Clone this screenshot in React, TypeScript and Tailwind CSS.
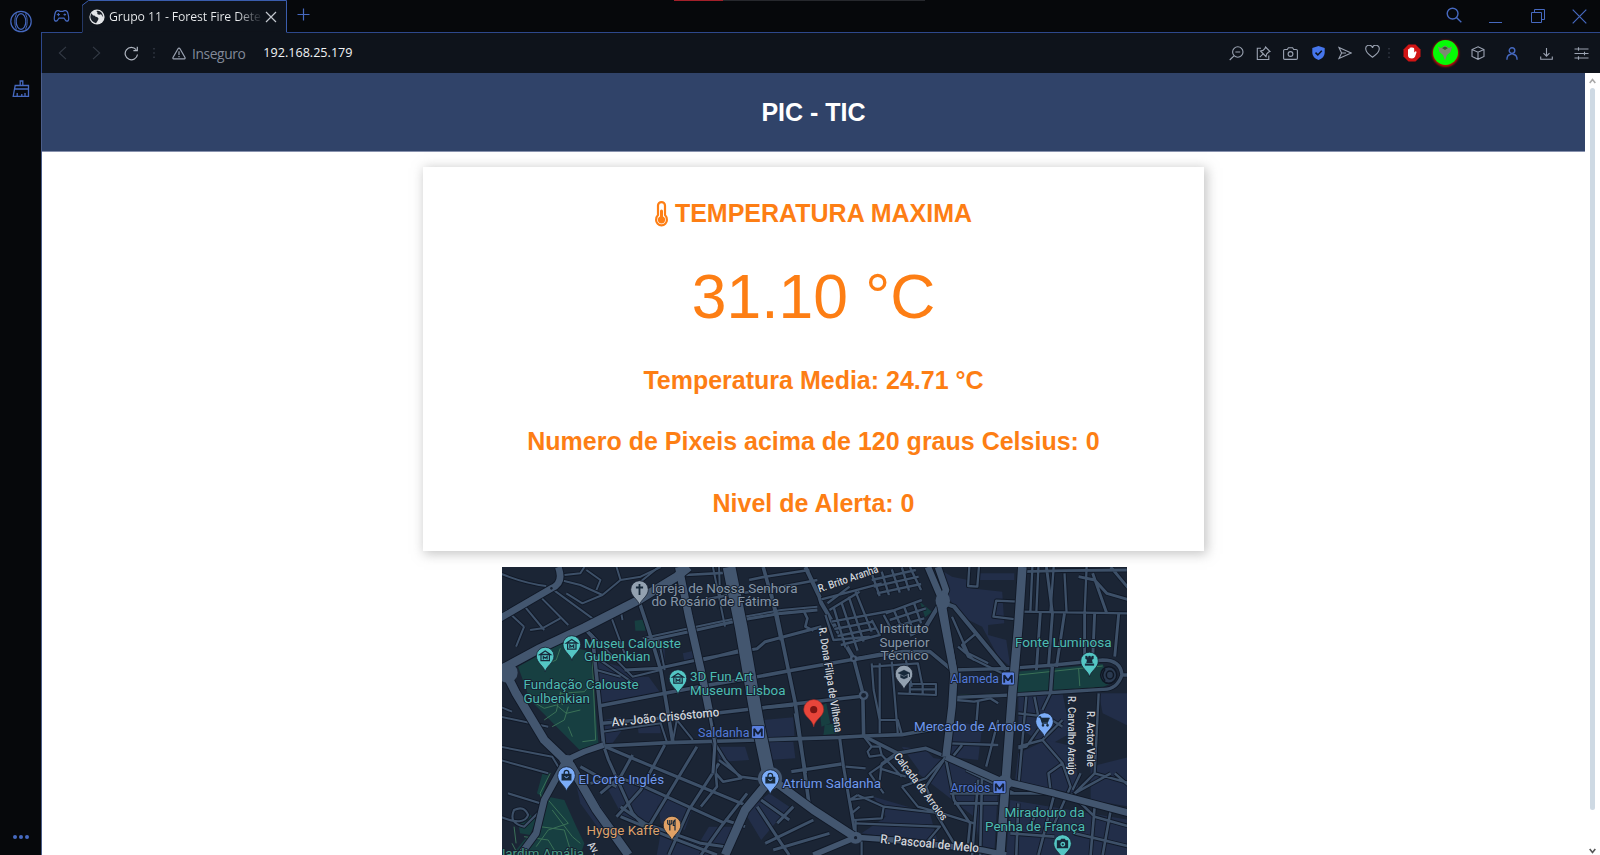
import React from 'react';

const BLUE = '#4669c0';
const GRAY = '#9ba3b2';

type RoadProps = { d: string; w: number; c?: string };

const areas: string[] = [
  'M240 300L300 320L345 350L370 350L400 400L250 430Z',
  'M395 240H410V325H395Z',
  'M455 280L490 270V310H460Z',
  'M1085 21L1125 50L1165 60L1170 85L1250 95L1255 190L1215 195V225L1260 240L1270 320L1240 290L1200 200L1150 170L1120 120Z',
  'M1195 40H1280V60H1195Z',
  'M260 480L300 470L310 500L280 550L260 548Z',
  'M340 480H400V520H345Z',
  'M655 480L730 472L733 528L660 534Z',
  'M540 560H610L620 600L545 606Z',
  'M660 545H730L735 595L668 600Z',
  'M180 620L230 700L300 830L260 830L200 730Z',
  'M270 690L310 660L400 710L380 790L310 780Z',
  'M390 700L480 740L460 810L400 790Z',
  'M610 760L670 700L720 740L650 840Z',
  'M400 820L520 850V885H390Z',
  'M1060 590L1110 600L1240 670L1230 885H1200L1180 770L1040 640Z',
  'M930 710L1070 760L1090 850L900 820L960 770Z',
  'M1290 410L1400 400L1420 520L1360 560L1290 500Z',
  'M1360 540L1430 560L1440 700L1280 680L1290 580Z',
  'M1120 480L1200 500L1190 600L1118 590Z',
  'M1490 400L1568 400V500L1500 460Z',
  'M1470 620L1568 590V740L1470 720Z',
  'M1270 720L1568 780V885H1260Z',
  'M1000 560L1060 570L1100 620L1060 660Z',
  'M520 800L600 800L560 860L500 840Z',
];

const greens: string[] = [
  'M45 320L150 250L225 275L245 550L200 572L75 420Z',
  'M335 182L362 178V212H337Z',
  'M1045 125L1075 155L1058 172Z',
  'M1285 335L1500 312L1520 370L1500 382L1285 400Z',
  'M795 440L812 430L822 490L800 500Z',
  'M808 495L845 488L842 520L805 525Z',
  'M120 710L160 720L190 800L210 850L200 885H30L60 840L100 800Z',
  'M45 790L75 765L90 780L75 825L50 820Z',
  'M108 630L122 640L105 710L92 700Z',
];

const roads: RoadProps[] = [
  // narrow streets, west
  { w: 2.4, d: 'M0 40Q60 70 115 78M15 150L60 200M55 130L110 210M55 130L20 155M60 200L40 260M75 210L105 205L150 175M128 85L230 175M100 110L170 195M150 60L200 75L255 105L300 60L290 21M160 45L200 40L210 21M255 105L205 130L165 100M300 60L350 50L400 21M215 30L250 60L240 90' },
  { w: 2.4, d: 'M275 165L310 280M225 220L330 350L400 330M225 280L345 380M240 330L300 350M300 150L305 180' },
  { w: 4, d: 'M345 120L370 210L400 330L430 545M210 205L230 230L245 400L258 555' },
  { w: 3.5, d: 'M365 242L470 215L600 180L700 160L790 150M310 330L395 325L490 300L620 270L640 266L660 245L800 200M505 300L600 270' },
  { w: 2.4, d: 'M355 235L470 205L600 172L700 150L790 140M530 21L560 200M545 21L548 110L590 100M610 130L680 120M395 21L345 70M395 240L410 330' },
  { w: 3, d: 'M620 60L660 50L770 30M600 100L680 85L790 60M465 130L590 100M460 45L570 38M755 150L765 175L760 200L780 212' },
  { w: 4, d: 'M250 437L430 395L520 375L620 355L730 330L880 298L960 280' },
  { w: 4, d: 'M255 490L520 462L640 445L780 425L905 408' },
  { w: 2.4, d: 'M255 515L400 490L415 545M430 545L440 480L480 540M525 470L540 550M0 470L120 500M0 560L130 590L145 620M0 600L120 640M0 440L30 455' },
  { w: 4, d: 'M258 558L420 548L640 540L845 532L905 528L1000 524L1120 498' },
  { w: 3.4, d: 'M258 558L340 600L430 645L620 740M258 558L270 600L330 760L360 800M330 585L300 650L250 700M410 555L350 690L290 770M490 560L430 680L370 800M225 670L290 650L360 680L560 790M200 620L290 680M545 610L470 750L420 885M615 700L550 800L500 885M300 740L360 790L500 850L560 860M300 770L420 830L540 885' },
  { w: 3, d: 'M535 550L560 600L600 655L555 665L530 630M545 600L600 650L660 660M530 545L540 680L500 740' },
  { w: 2.5, d: 'M0 770Q60 800 70 765Q60 735 35 750Q20 790 60 800L110 740M20 700L100 730' },
  // centre
  { w: 4, d: 'M655 21L690 170L735 430L770 740M675 100L700 240M745 530L760 640' },
  { w: 3.8, d: 'M735 460L745 530M725 635L850 612M640 445L730 435' },
  { w: 3.4, d: 'M845 530L855 620L885 830M690 790L730 740M660 850L780 780M680 870L820 820M640 740L700 850L720 885M700 680L770 740M560 780L610 800M650 720L720 780' },
  { w: 4.5, d: 'M760 21L795 110L800 130L880 295' },
  { w: 4, d: 'M880 295L903 400L905 528L990 580L1060 565L1110 590' },
  { w: 2.6, d: 'M880 295L960 285M925 310L930 390L945 480L945 520M945 310V480H990L1000 524M975 305L990 520M925 320L1040 310L1050 370M1010 300L1025 380M990 400L1085 405V372H1020V400M1052 372V405M1020 388H1085' },
  { w: 4, d: 'M885 298L1000 275L1070 275L1125 330' },
  { w: 2.6, d: 'M905 528L925 560L915 575L920 590L950 585L945 560L925 560M950 585L1000 650M985 580L950 610L945 660M945 625L1010 650M1000 680L1060 655L1110 590M1000 680L1040 740L1100 760M890 705L870 720L880 780L950 775L955 740L890 705M955 740L1100 760L1180 790M870 720L930 710M895 740L875 760M885 790L1095 800L1060 850' },
  { w: 2.6, d: 'M955 700L920 640L980 590M860 620L910 625M900 830L900 885M885 780V830' },
  // east
  { w: 4.5, d: 'M1100 120L1060 200L1020 225M1095 125L1130 140L1260 330' },
  { w: 2.7, d: 'M1125 170L1165 280L1215 310M1185 220L1150 255L1165 290L1250 340M1140 260L1180 300M1168 21L1165 78L1188 80L1192 21M1290 125L1235 122L1228 170L1285 178M1295 155L1568 160M1325 21L1320 155M1340 21L1335 155M1378 21L1370 155M1405 40L1410 155M1460 21L1455 160' },
  { w: 3.3, d: 'M1300 35L1400 32L1560 30M1360 21L1375 160L1365 320M1405 160L1385 320M1345 155L1335 330M1455 160V310M1475 40L1510 160M1480 160L1475 300M1540 160L1530 290M1440 50L1480 60L1510 100L1568 120M1520 21L1568 90' },
  { w: 3.8, d: 'M1130 330L1270 325L1380 315L1500 300Q1545 300 1548 345Q1535 390 1500 388L1275 405L1135 412M1375 315L1370 400M1545 345H1568' },
  { w: 2.8, d: 'M1135 420L1180 425L1220 415L1240 430M1190 425L1185 500M1240 480L1210 620M1120 550L1240 555M1290 460L1360 470L1400 500M1310 410L1290 680M1330 410L1345 500L1310 560L1290 565M1370 400L1350 450M1350 540L1400 610L1420 680L1380 790M1290 560L1350 540L1400 480M1400 610L1365 640L1370 690M1490 400L1480 640L1430 700M1425 690L1445 640M1480 640L1568 670M1430 700L1520 640M1530 640L1568 680' },
  { w: 3, d: 'M1110 590L1060 680L1090 770L1130 850M1110 600L1130 720L1170 790L1165 850M1150 555L1120 600M1160 630L1280 700M1190 660L1175 885M1120 700H1380M1130 730H1240M1200 640L1195 885M1290 730L1285 885M1340 740L1320 800M1380 700L1340 885M1480 740L1470 885M1520 750L1500 885M1430 820L1568 860M1420 700L1480 770L1568 800M1270 820L1380 830' },
];

const mainRoads: RoadProps[] = [
  { w: 7, d: 'M0 175L128 85Q160 70 145 21' },
  { w: 9, d: 'M0 330L100 265L210 203L345 120L440 50L470 21' },
  { w: 9, d: 'M15 340L40 400L110 540L175 615L240 750L320 885' },
  { w: 7, d: 'M165 600L110 720L90 820L50 885' },
  { w: 6, d: 'M165 600L210 575L258 555' },
  { w: 8, d: 'M445 21L470 170L500 330L520 450' },
  { w: 3.5, d: 'M520 450L535 550L530 640' },
  { w: 13, d: 'M570 21L600 200L640 480L668 640' },
  { w: 9, d: 'M672 660L610 750L560 885' },
  { w: 8.5, d: 'M690 670L780 750L885 832' },
  { w: 6, d: 'M885 832L980 840L1200 870L1260 885' },
  { w: 6, d: 'M885 832L780 885' },
  { w: 7, d: 'M1065 21L1100 120L1125 300L1130 340M1090 21L1110 90L1100 120' },
  { w: 8, d: 'M1095 120L1130 340L1125 440L1110 590' },
  { w: 9, d: 'M1300 21L1290 200L1275 400L1260 640L1245 885' },
  { w: 7, d: 'M1110 590L1240 660L1380 700L1568 760' },
];

const blockStreets =
  'M815 130L870 80M820 150L895 95M825 185L985 150M810 165L830 240L920 230M830 140L860 262M850 128L890 272M868 110L905 245M885 95L925 215M800 118L950 70M832 207L930 185M840 228L935 205M848 255L945 225L925 180M925 60L1035 30M930 80L1042 50M938 100L1048 72M925 40L945 108M950 35L968 105M975 28L995 98M1000 22L1018 92M1020 21L1048 90M960 160L1050 120M970 180L1060 145M980 200L1056 175M980 150L1000 205M1005 138L1025 200M1030 128L1048 190M955 165L975 210';

const parkPaths =
  'M75 420L110 445L140 435L165 460L200 450M110 480L140 455L150 400L210 395L240 350M215 280L230 300L238 540L205 545M130 500L160 480L170 440M180 530L170 500M150 265L140 300L120 310M150 395L155 435M1290 345L1500 318M1440 325L1443 378M1140 406L1285 400L1480 384M125 640L100 700L110 740M120 720L170 790L120 810L90 860M130 750L180 830L200 850M60 830L120 840L140 880M100 800L160 810L175 870M30 850L45 885M35 800L40 850';

function Roads({ list }: { list: RoadProps[] }) {
  return (
    <>
      {list.map((r, i) => (
        <path key={'c' + i} d={r.d} stroke="#111927" strokeWidth={r.w + 1.4} vectorEffect="non-scaling-stroke" />
      ))}
      {list.map((r, i) => (
        <path key={'r' + i} d={r.d} stroke={r.c ?? '#3d5068'} strokeWidth={r.w - 0.4} vectorEffect="non-scaling-stroke" />
      ))}
    </>
  );
}

type LabelProps = { x: number; y: number; w: number; c: string; children: string; size?: number; rotate?: number; bold?: boolean };

function Label({ x, y, w, c, children, size = 13.6, rotate = 0, bold }: LabelProps) {
  return (
    <text
      x={x}
      y={y}
      textLength={w}
      lengthAdjust="spacingAndGlyphs"
      fontSize={size}
      fill={c}
      fontWeight={bold ? 500 : 400}
      stroke="#172131"
      strokeWidth={2}
      strokeLinejoin="round"
      paintOrder="stroke"
      transform={`rotate(${rotate} ${x} ${y})`}
    >
      {children}
    </text>
  );
}

function Pin({ x, y, c, children }: { x: number; y: number; c: string; children: React.ReactNode }) {
  return (
    <g transform={`translate(${x} ${y})`}>
      <path d="M0 16C-1 10-8.8 7-8.8 0A8.8 8.8 0 0 1 8.8 0C8.8 7 1 10 0 16Z" fill={c} stroke="#172131" strokeWidth="0.8" />
      <g fill="none" stroke="#17293a" strokeWidth="1.3">
        {children}
      </g>
    </g>
  );
}

const Museum = () => (
  <>
    <path d="M-5.3-1.5L0-5L5.3-1.5Z" />
    <path d="M-4.2-1V4.6H4.2V-1M-1.9 3.5V0.5L0 2.2L1.9 0.5V3.5" strokeWidth="1.2" />
  </>
);

const Bag = () => (
  <>
    <path d="M-4.3-1.2H4.3V4.4H-4.3Z" fill="#17293a" />
    <path d="M-2.3-1V-2.8A2.3 2.3 0 0 1 2.3-2.8V-1" />
    <path d="M-2 1Q0 3.3 2 1" stroke="#7bacf8" strokeWidth="1" />
  </>
);

function Metro({ x, y }: { x: number; y: number }) {
  return (
    <g>
      <rect x={x - 6.5} y={y - 6.5} width="13" height="13" rx="1.5" fill="#5a80e0" stroke="#172131" strokeWidth="0.8" />
      <path d="M-3.8 4.2V-3.2L0 2L3.8-3.2V4.2" transform={`translate(${x} ${y})`} fill="none" stroke="#14203a" strokeWidth="1.9" strokeLinejoin="bevel" />
    </g>
  );
}

function CityMap() {
  const teal = '#4dbcb2';
  const blue = '#7099ee';
  const metro = '#5379d6';
  const gray = '#8696a7';
  const white = '#cfd3da';
  return (
    <svg width="625" height="288" viewBox="502 567 625 288" className="block" fontFamily="Roboto, sans-serif">
      <rect x="502" y="567" width="625" height="288" fill="#1b2535" />
      <g transform="translate(500 560) scale(0.40179 0.33333)" fill="none" strokeLinejoin="round">
        {areas.map((d) => (
          <path key={d} d={d} fill="#222e49" />
        ))}
        {greens.map((d) => (
          <path key={d} d={d} fill="#173f41" />
        ))}
        <path d={parkPaths} stroke="#3a7157" strokeWidth="1" vectorEffect="non-scaling-stroke" />
        <Roads list={roads} />
        <Roads list={[{ w: 2.8, d: blockStreets }]} />
        <Roads list={mainRoads.map((r) => ({ ...r, c: '#43566f' }))} />
        <g fill="#43566f">
          <ellipse cx="18" cy="338" rx="26" ry="30" />
          <ellipse cx="672" cy="655" rx="30" ry="34" />
          <ellipse cx="165" cy="600" rx="17" ry="15" />
          <ellipse cx="1102" cy="122" rx="18" ry="26" />
          <ellipse cx="1255" cy="668" rx="20" ry="22" />
          <ellipse cx="885" cy="833" rx="17" ry="18" />
          <ellipse cx="905" cy="406" rx="12" ry="14" />
          <ellipse cx="880" cy="296" rx="9" ry="10" />
          <ellipse cx="885" cy="833" rx="4" ry="5" fill="#172131" />
          <ellipse cx="905" cy="406" rx="6" ry="7" fill="#172131" />
          <ellipse cx="880" cy="296" rx="3" ry="4" fill="#172131" />
          <ellipse cx="128" cy="85" rx="3" ry="4" fill="#172131" />
        </g>
        <ellipse cx="1515" cy="345" rx="20" ry="25" fill="#2a3a50" stroke="#0f1724" strokeWidth="1.5" vectorEffect="non-scaling-stroke" />
        <ellipse cx="1518" cy="345" rx="9" ry="12" stroke="#0f1724" strokeWidth="1.5" vectorEffect="non-scaling-stroke" />
        <path d="M1506 328Q1494 345 1506 362" stroke="#0f1724" strokeWidth="1.5" vectorEffect="non-scaling-stroke" />
      </g>

      <Label x={651.5} y={592.5} w={146} c={gray}>Igreja de Nossa Senhora</Label>
      <Label x={651.5} y={606} w={127.5} c={gray}>do Rosário de Fátima</Label>
      <Label x={584} y={647.5} w={97} c={teal}>Museu Calouste</Label>
      <Label x={584} y={661} w={66.5} c={teal}>Gulbenkian</Label>
      <Label x={523.5} y={689} w={115} c={teal}>Fundação Calouste</Label>
      <Label x={523.5} y={702.5} w={66.5} c={teal}>Gulbenkian</Label>
      <Label x={690} y={681} w={63} c={teal}>3D Fun Art</Label>
      <Label x={690} y={694.5} w={95.5} c={teal}>Museum Lisboa</Label>
      <Label x={879.5} y={633} w={49} c={gray}>Instituto</Label>
      <Label x={879.5} y={646.5} w={50} c={gray}>Superior</Label>
      <Label x={880.5} y={660} w={48} c={gray}>Técnico</Label>
      <Label x={1015} y={647} w={96.5} c={teal}>Fonte Luminosa</Label>
      <Label x={950.5} y={682.5} w={48.5} c={metro}>Alameda</Label>
      <Label x={698} y={736.5} w={51.5} c={metro}>Saldanha</Label>
      <Label x={914} y={730.5} w={117} c={blue}>Mercado de Arroios</Label>
      <Label x={950.5} y={791.5} w={40} c={metro}>Arroios</Label>
      <Label x={578.5} y={784} w={85.5} c={blue}>El Corte Inglés</Label>
      <Label x={782.5} y={787.5} w={98.5} c={blue}>Atrium Saldanha</Label>
      <Label x={586.5} y={834.5} w={73} c="#dca06a">Hygge Kaffe</Label>
      <Label x={1004.5} y={816.5} w={80} c={teal}>Miradouro da</Label>
      <Label x={985} y={830.5} w={100} c={teal}>Penha de França</Label>
      <Label x={498} y={858} w={86} c="#4a9a84">Jardim Amália</Label>
      <Label x={612} y={726.5} w={108} c={white} size={12.5} rotate={-5.5} bold>Av. João Crisóstomo</Label>
      <Label x={819.5} y={592.5} w={63} c={white} size={11} rotate={-19} bold>R. Brito Aranha</Label>
      <Label x={818.5} y={628} w={106} c={white} size={11} rotate={81} bold>R. Dona Filipa de Vilhena</Label>
      <Label x={893.5} y={756.5} w={81} c={white} size={11} rotate={53} bold>Calçada de Arroios</Label>
      <Label x={880} y={843} w={99} c={white} size={12.5} rotate={5.5} bold>R. Pascoal de Melo</Label>
      <Label x={1068} y={696} w={79} c={white} size={11} rotate={90} bold>R. Carvalho Araújo</Label>
      <Label x={1086.5} y={711} w={56} c={white} size={11} rotate={90} bold>R. Actor Vale</Label>
      <Label x={587} y={845} w={30} c={white} size={11} rotate={55} bold>Av. Ant</Label>

      <Metro x={1008} y={678.5} />
      <Metro x={758} y={732} />
      <Metro x={999.5} y={787} />

      <Pin x={639.5} y={589.5} c="#93a1b0">
        <path d="M0-5.5V5.5M-3.6-2H3.6" strokeWidth="1.8" />
      </Pin>
      <Pin x={571.8} y={644.5} c="#54c6c4"><Museum /></Pin>
      <Pin x={545.2} y={656} c="#54c6c4"><Museum /></Pin>
      <Pin x={678} y={678.5} c="#54c6c4"><Museum /></Pin>
      <Pin x={1089.5} y={661} c="#54c6c4">
        <path d="M-4-5H-2.2V-3.7H-1V-5H1V-3.7H2.2V-5H4V-2.2L2.4-1.2L3 2H-3L-2.4-1.2L-4-2.2ZM-4.4 4.5H4.4V2.8H-4.4Z" fill="#17293a" strokeWidth="0.3" />
      </Pin>
      <Pin x={904} y={674} c="#93a1b0">
        <path d="M-6-1L0-4L6-1L0 2ZM-3.5 1V3.5L0 5L3.5 3.5V1L0 2.8Z" fill="#17293a" strokeWidth="0.3" />
        <path d="M5.5-1V3" strokeWidth="0.9" />
      </Pin>
      <Pin x={566.5} y={775.5} c="#7bacf8"><Bag /></Pin>
      <Pin x={770.3} y={778.5} c="#7bacf8"><Bag /></Pin>
      <Pin x={1044.5} y={721.5} c="#7bacf8">
        <path d="M-6-4.5H-4L-2 1.5H3.5" />
        <path d="M-3.6-3.5H5L3.3 0.5H-2.3Z" fill="#17293a" strokeWidth="0.6" />
        <circle cx="-1.5" cy="3.8" r="0.7" />
        <circle cx="3" cy="3.8" r="0.7" />
      </Pin>
      <Pin x={672} y={825} c="#e0a165">
        <path d="M-2.2-5V5.5M-4.3-5V-2Q-4.3-0.5-2.2-0.5Q-0.2-0.5-0.2-2V-5M3 5.5V-5Q1 -4 1.3 0.5H3" strokeWidth="1.2" />
      </Pin>
      <Pin x={1062.5} y={843.5} c="#54c6c4">
        <path d="M-5-2.5H-2L-1-4H2L3-2.5H5V4H-5Z" fill="#17293a" />
        <circle cx="0.3" cy="0.8" r="1.8" stroke="#54c6c4" />
      </Pin>
      <path d="M813.7 727C812.6 719 803.7 717 803.7 709.5A10 10 0 0 1 823.7 709.5C823.7 717 814.8 719 813.7 727Z" fill="#e8453a" stroke="#8f2a28" strokeWidth="0.6" />
      <circle cx="813.7" cy="709.7" r="3.6" fill="#7d1512" />
    </svg>
  );
}

type IconProps = { w?: number; h?: number; color?: string; sw?: number; box: string; children: React.ReactNode };

function Icon({ w = 16, h = 16, color = GRAY, sw = 1.1, box, children }: IconProps) {
  return (
    <svg width={w} height={h} viewBox={box} fill="none" stroke={color} strokeWidth={sw} className="shrink-0">
      {children}
    </svg>
  );
}

function Cell({ className, children }: { className: string; children: React.ReactNode }) {
  return <div className={'flex h-full shrink-0 items-center justify-center ' + className}>{children}</div>;
}

function Sidebar() {
  return (
    <aside className="flex w-[41px] shrink-0 flex-col items-center justify-between bg-[#06080b] pt-[10px] pb-[16px]">
      <div className="flex flex-col items-center gap-[47px]">
        <Icon w={23} h={23} color={BLUE} sw={1.2} box="-0.5 0 23 23">
          <circle cx="11.5" cy="11.5" r="10.2" />
          <ellipse cx="11.5" cy="11.5" rx="4.8" ry="7.8" />
          <path d="M7 3.5Q3.5 11.5 7 19.5M16 3.5Q19.5 11.5 16 19.5" strokeWidth="0.9" />
        </Icon>
        <Icon w={18} h={18} color={BLUE} sw={1.3} box="0 0 18 18">
          <path d="M3.2 5.5H16.5V9H2.5ZM2.5 9L1.2 16.3H16.5V9M8.2 5.5V1H10.8V5.5M5.2 13V16M9.8 14V16M13 13V16" />
        </Icon>
      </div>
      <div className="flex gap-[2px]">
        <i className="size-[4px] rounded-full bg-[#4669c0]" />
        <i className="size-[4px] rounded-full bg-[#4669c0]" />
        <i className="size-[4px] rounded-full bg-[#4669c0]" />
      </div>
    </aside>
  );
}

function TabBar() {
  return (
    <div className="relative flex h-[33px] bg-[#06080b] font-['Open_Sans',sans-serif]">
      <div className="absolute top-0 left-[633px] flex h-px w-[251px]">
        <i className="w-[49px] bg-[#a3202a]" />
        <i className="flex-1 bg-[#26282d]" />
      </div>
      <Cell className="w-[41px] border-b border-[#2d488c]">
        <Icon w={17} h={14} color={BLUE} sw={1.2} box="0 0 17 14">
          <path d="M4.2 1.7Q6 1.2 7 2.4H10Q11 1.2 12.8 1.7Q14.5 2 15.2 5.5Q16.2 10 15.3 11.5Q14 13 12.3 11L11 9.2H6L4.7 11Q3 13 1.7 11.5Q.8 10 1.8 5.5Q2.5 2 4.2 1.7Z" />
          <path d="M5.4 4V7.2M3.8 5.6H7M11.8 4.5V6.7M10.5 5.6H13.1" strokeWidth="1" />
        </Icon>
      </Cell>
      <div className="relative flex w-[205px] items-center">
        <svg width="205" height="33" className="absolute inset-0">
          <path d="M0 32.5V5.5L6.5 .5H204.5V32.5" fill="#0e131b" stroke="#3a5dae" />
          <path d="M1 32.5H204" stroke="#0e131b" strokeWidth="2" />
        </svg>
        <div className="relative flex w-full items-center pl-[7px]">
          <svg width="16" height="16" viewBox="0 0 16 16" className="shrink-0">
            <circle cx="8" cy="8" r="7.6" fill="#e3e5e8" />
            <path d="M2 4.2Q5 5.5 6.3 7.5Q9 8 9.6 9.8Q8.5 12.6 7 14.2Q2 13 1.3 8ZM7.3 2Q9 3.2 8.3 5Q10 6.4 12 5.3L14.2 8.2Q14 5 12 3Q9.5 1.4 7.3 2Z" fill="#1a2029" />
            <path d="M2.5 4.2L5 3.2L6 5.2L4.3 6.8Z" fill="#e3e5e8" />
          </svg>
          <span className="ml-[4px] w-[156px] overflow-hidden bg-gradient-to-r from-[#eceef0] from-82% to-[#0e131b] to-99% bg-clip-text text-[12.3px] leading-[18px] tracking-[-0.11px] whitespace-nowrap text-transparent">
            Grupo 11 - Forest Fire Dete
          </span>
          <Icon w={12} h={12} color="#c3c7ce" sw={1.2} box="0 0 12 12">
            <path d="M1 1L11 11M11 1L1 11" />
          </Icon>
        </div>
      </div>
      <Cell className="w-[32px] border-b border-[#2d488c] pb-[3px]">
        <Icon w={13} h={13} color={BLUE} sw={1.2} box="0 0 13 13">
          <path d="M6.5 .5V12.5M.5 6.5H12.5" />
        </Icon>
      </Cell>
      <div className="flex flex-1 justify-end border-b border-[#2d488c]">
        <Cell className="w-[41.5px] pr-[2px] pb-[2px]">
          <Icon w={16} h={16} color={BLUE} sw={1.4} box="0 0 16 16">
            <circle cx="6.6" cy="6.6" r="5.4" />
            <path d="M10.5 10.5L15.3 15.3" />
          </Icon>
        </Cell>
        <Cell className="w-[41.5px] pt-[13px] pr-[1px]">
          <i className="h-px w-[13px] bg-[#4669c0]" />
        </Cell>
        <Cell className="w-[41.5px]">
          <Icon w={14} h={14} color={BLUE} sw={1} box="0 0 14 14">
            <path d="M.5 3.5H10.5V13.5H.5ZM3.5 3.5V.5H13.5V10.5H10.5" />
          </Icon>
        </Cell>
        <Cell className="w-[41.5px]">
          <Icon w={15} h={15} color={BLUE} sw={1.2} box="0 0 15 15">
            <path d="M.7 .7L14.3 14.3M14.3 .7L.7 14.3" />
          </Icon>
        </Cell>
      </div>
    </div>
  );
}

function Dots() {
  return (
    <svg width="2" height="12" viewBox="0 0 2 12" fill="#2a303b">
      <path d="M0 1H2V2.6H0ZM0 5.2H2V6.8H0ZM0 9.4H2V11H0Z" />
    </svg>
  );
}

function AddressBar() {
  return (
    <div className="flex h-[40px] items-center justify-between border-l border-[#2d488c] bg-[#0e131b] pr-[2px] font-['Open_Sans',sans-serif]">
      <div className="flex h-full items-center">
        <Cell className="w-[40px]">
          <Icon w={9} h={14} color="#333a45" box="0 0 9 14"><path d="M8 .8L1.3 7L8 13.2" /></Icon>
        </Cell>
        <Cell className="w-[28px]">
          <Icon w={9} h={14} color="#333a45" box="0 0 9 14"><path d="M1 .8L7.7 7L1 13.2" /></Icon>
        </Cell>
        <Cell className="w-[43px]">
          <Icon w={15} h={15} color="#b0b6c1" sw={1.2} box="0 0 15 15">
            <path d="M13.5 8.5A6.2 6.2 0 1 1 12.2 3.7M13.3 .8V4.7H9.4" />
          </Icon>
        </Cell>
        <Dots />
        <Icon w={40} h={13} color={GRAY} sw={1.2} box="-17 0 40 13">
          <path d="M7 1.2Q7.6 1.2 8 1.8L13 10.5Q13.4 11.8 12.4 11.9H1.6Q.6 11.8 1 10.5L6 1.8Q6.4 1.2 7 1.2ZM7 4.3V8M7 9V10.3" />
        </Icon>
        <span className="-ml-[3px] mt-[2px] text-[13.8px] leading-[20px] font-normal tracking-[-0.4px] text-[#818998]">Inseguro</span>
        <span className="ml-[18px] text-[12.6px] leading-[18px] text-[#f0f2f4]">192.168.25.179</span>
      </div>
      <div className="flex h-full items-center">
        <Cell className="w-[27.2px]">
          <Icon w={15} h={15} box="0 0 15 15"><circle cx="8.8" cy="6" r="5.2" /><path d="M5 9.8L.7 14M6.4 6H11.2" /></Icon>
        </Cell>
        <Cell className="w-[27.2px]">
          <Icon w={15} h={15} box="0 0 15 15"><path d="M5 2.2H1.3V13.5H12.8V9.5M9.5 1L14 5.5L12.6 6L10.6 8L10 10.6L7.4 8L4.5 5L7 4.4L9 2.4ZM7.2 7.8L3.7 11.2" /></Icon>
        </Cell>
        <Cell className="w-[27.2px]">
          <Icon w={15} h={13} box="0 0 15 13"><path d="M1.8 2.5H4.3L5.4 .8H9.6L10.7 2.5H13.2Q14.4 2.5 14.4 3.6V11.3Q14.4 12.4 13.2 12.4H1.8Q.6 12.4 .6 11.3V3.6Q.6 2.5 1.8 2.5Z" /><circle cx="7.5" cy="7" r="2.4" /></Icon>
        </Cell>
        <Cell className="w-[27.2px] pb-px">
          <svg width="13" height="14" viewBox="0 0 13 14"><path d="M6.5 0L12.7 2V7Q12.4 11.8 6.5 14Q.6 11.8 .3 7V2Z" fill="#4676ec" /><path d="M3.5 6.6L5.8 8.9L9.8 4.8" fill="none" stroke="#0e131b" strokeWidth="1.5" /></svg>
        </Cell>
        <Cell className="w-[27.2px]">
          <Icon w={14} h={14} box="0 0 14 14"><path d="M1 1.5L13.2 7L1 12.5L3.6 7ZM3.6 7H8" /></Icon>
        </Cell>
        <Cell className="w-[27.2px] pb-[3px]">
          <Icon w={15} h={13} box="0 0 15 13"><path d="M7.5 12.2Q.8 7.5 .8 4.2A3.4 3.4 0 0 1 7.5 3A3.4 3.4 0 0 1 14.2 4.2Q14.2 7.5 7.5 12.2Z" /></Icon>
        </Cell>
        <Cell className="w-[6px]"><Dots /></Cell>
        <Cell className="w-[39px]">
          <svg width="18" height="18" viewBox="0 0 18 18">
            <path d="M5.5 .5H12.5L17.5 5.5V12.5L12.5 17.5H5.5L.5 12.5V5.5Z" fill="#d11414" />
            <path d="M5 9.5V5.5Q5.7 4.6 6.5 5.2V4Q7.2 3 8 3.8Q8.9 2.6 9.8 3.8Q11 3.4 11.2 4.8V8.6L12.2 7.4Q13.6 7 13.5 8.4L12 12.8Q11.3 14.5 9 14.5Q5.6 14.5 5 12Z" fill="#fff" />
          </svg>
        </Cell>
        <Cell className="w-[28px] pb-px">
          <div className="flex size-[25px] shrink-0 items-center justify-center rounded-full bg-[#05fb05] shadow-[0_1px_2px_1px_#b51208]">
            <svg width="16" height="16" viewBox="0 0 16 16"><path d="M1 1.5L4 3L8 .5L12 3L15 1.5L13.5 7L10 10L8 15.5L6 10L2.5 7Z" fill="#7c8a72" /><path d="M5 3L8 1.5L11 3L8 5Z" fill="#315d2c" /></svg>
          </div>
        </Cell>
        <Cell className="w-[37px]">
          <Icon w={14} h={14} box="0 0 14 14"><path d="M7 .8L13 3.5V10.5L7 13.3L1 10.5V3.5ZM1 3.5L7 6.2L13 3.5M7 6.2V13.3" /></Icon>
        </Cell>
        <Cell className="w-[32px]">
          <Icon w={12} h={13} color={BLUE} sw={1.4} box="0 0 12 13"><circle cx="6" cy="3.6" r="2.8" /><path d="M.9 12.7Q1 8 4.2 7.5M11.1 12.7Q11 8 7.8 7.5M3.3 8L6 6.6L8.7 8" /></Icon>
        </Cell>
        <Cell className="w-[37px]">
          <Icon w={13} h={13} box="0 0 13 13"><path d="M6.5 1V9M3.5 6.2L6.5 9.2L9.5 6.2M.7 9.5V12.2H12.3V9.5" /></Icon>
        </Cell>
        <Cell className="w-[33px]">
          <Icon w={15} h={13} box="0 0 15 13"><path d="M.5 2H14.5M.5 6.5H14.5M.5 11H14.5M4.5 .2V3.8M10.5 4.7V8.3M4.5 9.2V12.8" /></Icon>
        </Cell>
      </div>
    </div>
  );
}

function Thermometer() {
  return (
    <svg width="13" height="26" viewBox="0 0 13 26" className="mr-[7px] shrink-0">
      <path d="M3 14V4.6A3.5 3.5 0 0 1 10 4.6V14Q11.9 15.9 11.9 18.9A5.4 5.4 0 0 1 1.1 18.9Q1.1 15.9 3 14Z" fill="none" stroke="#fd7e14" strokeWidth="2.2" />
      <path d="M6.5 10V18" stroke="#fd7e14" strokeWidth="3" strokeLinecap="round" />
      <circle cx="6.5" cy="18.8" r="3.6" fill="#fd7e14" />
    </svg>
  );
}

export default function App() {
  return (
    <div className="flex h-[855px] w-[1600px] overflow-hidden bg-white">
      <Sidebar />
      <div className="flex min-w-0 flex-1 flex-col">
        <TabBar />
        <AddressBar />
        <div className="flex min-h-0 flex-1 border-l border-[#4b5d89]">
          <main className="flex min-w-0 flex-1 flex-col items-center overflow-hidden bg-white font-['Liberation_Sans',Arial,sans-serif]">
            <header className="flex h-[79px] w-full shrink-0 justify-center border-b border-[#8791ad] bg-[#304369] pt-[25px]">
              <h1 className="text-[25px] leading-[29px] font-bold text-white">PIC - TIC</h1>
            </header>
            <section className="mt-[15px] flex h-[384px] w-[781px] shrink-0 flex-col items-center bg-white pt-[32px] text-[25px] leading-[29px] font-bold text-[#fd7e14] shadow-[2px_2px_11px_1px_rgba(140,140,140,0.5)]">
              <h2 className="flex items-center">
                <Thermometer />
                TEMPERATURA MAXIMA
              </h2>
              <p className="mt-[33px] text-[62.4px] leading-[72px] font-normal">31.10 °C</p>
              <p className="mt-[33px]">Temperatura Media: 24.71 °C</p>
              <p className="mt-[32px]">Numero de Pixeis acima de 120 graus Celsius: 0</p>
              <p className="mt-[33px]">Nivel de Alerta: 0</p>
            </section>
            <div className="mt-[16px] shrink-0 pl-[2px]">
              <CityMap />
            </div>
          </main>
          <div className="flex w-[15px] shrink-0 flex-col items-center justify-between bg-white pt-[5px] pb-[1px]">
            <Icon w={7} h={6} color="#a8a8a8" sw={1.6} box="0 0 7 6"><path d="M.7 5L3.5 1.6L6.3 5" /></Icon>
            <div className="mt-[4px] mb-[38px] w-[5px] flex-1 rounded-full bg-[#ced9e3]" />
            <Icon w={7} h={6} color="#555" sw={1.6} box="0 0 7 6"><path d="M.7 1L3.5 4.4L6.3 1" /></Icon>
          </div>
        </div>
      </div>
    </div>
  );
}
